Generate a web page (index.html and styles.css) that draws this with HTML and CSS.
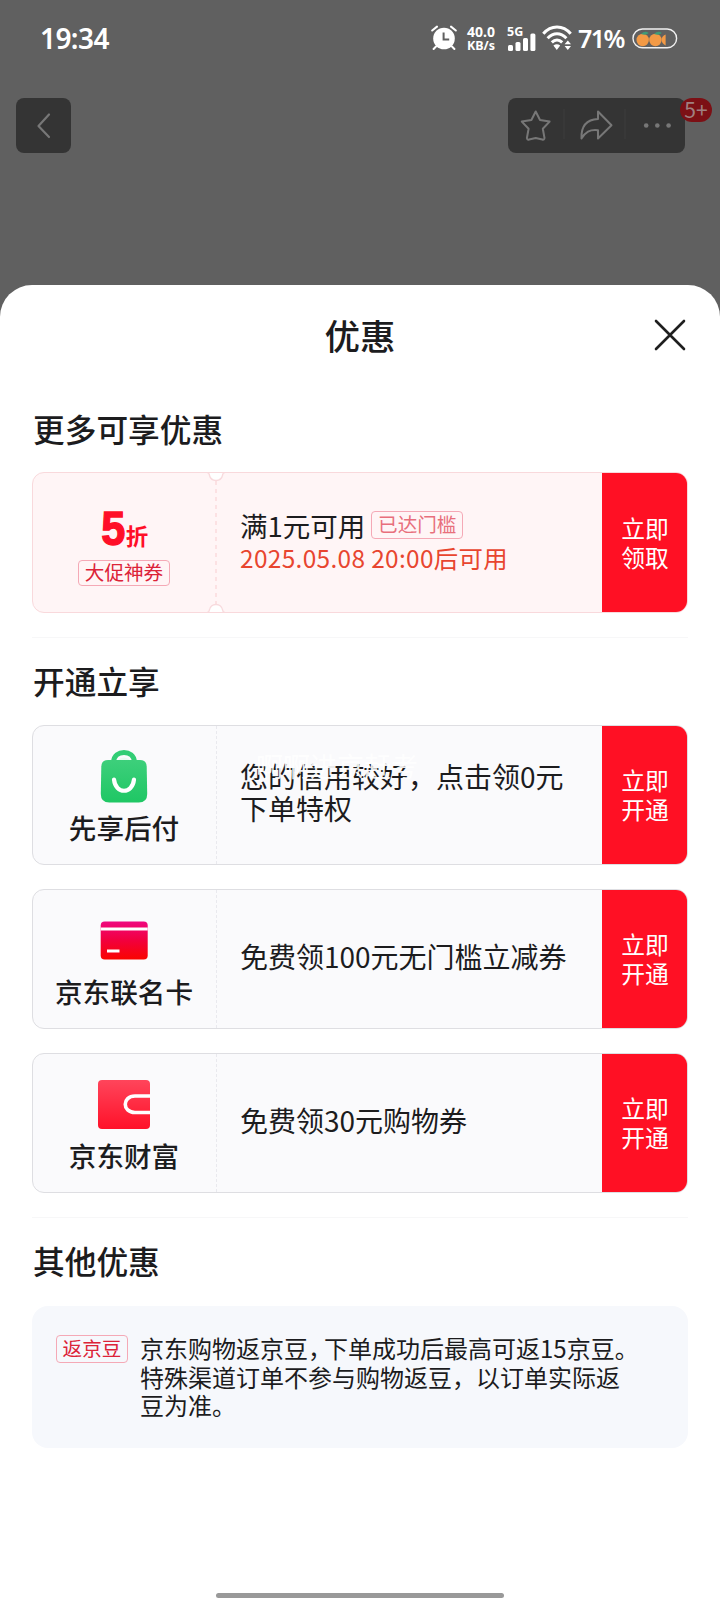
FILE: index.html
```html
<!DOCTYPE html>
<html lang="zh-CN">
<head>
<meta charset="utf-8">
<title>优惠</title>
<link rel="stylesheet" href="styles.css">
</head>
<body>
<div class="screen">
  <header class="status">
    <span class="time">19:34</span>
    <div class="status-icons">
      <svg class="alarm" width="26" height="26" viewBox="0 0 26 26">
        <circle cx="13" cy="13.5" r="10.8" fill="#fff"/>
        <path d="M1.2 5.5 6 1.6M24.8 5.5 20 1.6M5 21.5 2.6 24M21 21.5 23.4 24" stroke="#fff" stroke-width="2" stroke-linecap="round"/>
        <path d="M12.6 7.5v7h5.6" fill="none" stroke="#606060" stroke-width="2"/>
      </svg>
      <div class="speed"><span>40.0</span><span>KB/s</span></div>
      <div class="signal">
        <span class="net">5G</span>
        <svg width="28" height="18" viewBox="0 0 28 18" fill="#fff">
          <rect x="0" y="12" width="5" height="6" rx="1.5"/><rect x="7.5" y="9" width="5" height="9" rx="1.5"/><rect x="15" y="5" width="5" height="13" rx="1.5"/><rect x="22.4" y="0.5" width="5" height="17.5" rx="1.5"/>
        </svg>
      </div>
      <svg class="wifi" width="30" height="26" viewBox="0 0 30 26">
        <g fill="none" stroke="#fff" stroke-width="3">
          <path d="M1.3 8.8C9-.2 21-.2 28.7 8.8"/><path d="M5.6 13.2c5.8-6 13-6 18.8 0"/><path d="M9.8 17.4c3.2-3.2 7.2-3.2 10.4 0"/>
        </g>
        <path d="M11.4 20.6q3.4-2.6 6.8 0L14.8 25zM22.6 19.2l3.2-3.7 3.2 3.7zM22.6 21l3.2 4 3.2-4z" fill="#fff"/>
      </svg>
      <span class="percent">71%</span>
      <svg class="battery" width="46" height="21" viewBox="0 0 46 21">
        <rect x="1" y="1" width="43.6" height="18.8" rx="9.4" fill="none" stroke="#f1f1f1" stroke-width="1.4"/>
        <g fill="#f39a45"><circle cx="10.7" cy="12" r="6.2"/><circle cx="23.4" cy="12" r="6.2"/><path d="M33.6 6.6v10.8c-5.4-2-5.4-8.8 0-10.8z"/></g>
        <path d="M9 6q4-4 7.8-1-3 3-7.8 1zM22 6q4-4 7.8-1-3 3-7.8 1z" fill="#3f9a77"/>
      </svg>
    </div>
  </header>

  <nav class="toolbar">
    <div class="tool-back">
      <svg width="55" height="55" viewBox="0 0 55 55"><path d="M33 16.500 22.500 28l10.500 11" fill="none" stroke="#777" stroke-width="2.200" stroke-linecap="round" stroke-linejoin="round"/></svg>
    </div>
    <div class="tool-group">
      <svg width="177" height="55" viewBox="0 0 177 55" fill="none" stroke="#777" stroke-width="2" stroke-linejoin="round">
        <path d="M27.7 13.500l4.300 8.500 9.600 1.600-6.800 7.200 1.700 9.200q-.2 2.200-2.200 1.500l-6.600-1.500-6.600 1.500q-2 .7-2.200-1.500l1.700-9.200-6.800-7.200 9.600-1.600z"/>
        <path d="M90 13.500 103.500 27.300 90 40.500v-8.200c-8.500-1-12.500 2-16.500 8.200C73 28 79 21.500 90 21z"/>
        <path d="M56 11v30M117 11v30" stroke="#3d3d3d" stroke-width="1"/>
        <g fill="#777" stroke="none"><circle cx="138.200" cy="27.500" r="2.300"/><circle cx="149.300" cy="27.500" r="2.300"/><circle cx="160.600" cy="27.500" r="2.300"/></g>
      </svg>
      <span class="count">5+</span>
    </div>
  </nav>

  <main class="sheet">
    <div class="sheet-head">
      <h1>优惠</h1>
      <svg class="close" width="32" height="32" viewBox="0 0 32 32"><path d="M2 2l28 28M30 2L2 30" stroke="#1f1f1f" stroke-width="2.600" stroke-linecap="round"/></svg>
    </div>

    <section class="block">
      <h2>更多可享优惠</h2>
      <article class="card coupon">
        <div class="left">
          <div class="discount"><b>5</b><span>折</span></div>
          <span class="tag tag-promo">大促神券</span>
        </div>
        <div class="body">
          <p class="row">满1元可用<span class="tag tag-met">已达门槛</span></p>
          <p class="date">2025.05.08 20:00后可用</p>
        </div>
        <div class="action">立即<br>领取</div>
        <svg class="perforation" width="18" height="141" viewBox="0 0 18 141">
          <path d="M9 9v123" stroke="#fbdadd" stroke-width="1.500" stroke-dasharray="4 4"/>
          <path d="M1.500 0Q2 8 9 8.500 16 8 16.500 0zM1.500 141Q2 133 9 132.500 16 133 16.500 141z" fill="#fff"/>
          <path d="M0 .7Q2 .7 2.200 2.500 3.500 8.500 9 8.500 14.500 8.500 15.800 2.500 16 .7 18 .7M0 140.300Q2 140.300 2.200 138.500 3.500 132.500 9 132.500 14.500 132.500 15.800 138.500 16 140.300 18 140.300" fill="none" stroke="#f8dadd" stroke-width="1.300"/>
        </svg>
      </article>
    </section>

    <section class="block">
      <h2>开通立享</h2>
      <div class="cards">
        <article class="card">
          <div class="left service">
            <svg width="56" height="56" viewBox="0 0 56 56">
              <defs><linearGradient id="bag" x2="0" y2="1"><stop offset="0" stop-color="#3dcf7b"/><stop offset="1" stop-color="#1fc764"/></linearGradient></defs>
              <path d="M17.500 13C18 6 23 3.500 28 3.500S38 6 38.500 13" fill="none" stroke="#32cd75" stroke-width="5"/>
              <path d="M12 11h32q6.500 0 6.700 6.500l.5 27.500q0 8.500-8.500 8.500H13.300q-8.500 0-8.500-8.500l.5-27.500Q5.500 11 12 11z" fill="url(#bag)"/>
              <path d="M22 11q6-5 12 0z" fill="#e8faf0"/>
              <path d="M18 30.500c1.500 15 18.500 15 20 0" fill="none" stroke="#fff" stroke-width="4.200" stroke-linecap="round"/>
            </svg>
            <span>先享后付</span>
          </div>
          <div class="body"><p class="offer">您的信用较好，点击领0元下单特权</p><span class="watermark">啊啊进京赶考</span></div>
          <div class="action">立即<br>开通</div>
        </article>
        <article class="card">
          <div class="left service">
            <svg width="56" height="56" viewBox="0 0 56 56">
              <defs><linearGradient id="bank" x2="0" y2="1"><stop offset="0" stop-color="#ef087f"/><stop offset=".5" stop-color="#f2003d"/><stop offset="1" stop-color="#fa0500"/></linearGradient></defs>
              <rect x="4.700" y="8.500" width="47" height="38" rx="4" fill="url(#bank)"/>
              <path d="M4.700 16h47" stroke="#fff" stroke-width="3"/><path d="M11 38h12.500" stroke="#fff" stroke-width="3"/>
            </svg>
            <span>京东联名卡</span>
          </div>
          <div class="body"><p class="offer">免费领100元无门槛立减券</p></div>
          <div class="action">立即<br>开通</div>
        </article>
        <article class="card">
          <div class="left service">
            <svg width="56" height="56" viewBox="0 0 56 56">
              <defs><linearGradient id="wallet" x2="0" y2="1"><stop offset="0" stop-color="#ff455b"/><stop offset="1" stop-color="#ff1129"/></linearGradient></defs>
              <rect x="2" y="3" width="52" height="49" rx="4" fill="url(#wallet)"/>
              <path d="M54 19H39c-13 0-13 16.500 0 16.500h15" fill="none" stroke="#fff" stroke-width="3.600"/>
            </svg>
            <span>京东财富</span>
          </div>
          <div class="body"><p class="offer">免费领30元购物券</p></div>
          <div class="action">立即<br>开通</div>
        </article>
      </div>
    </section>

    <section class="block">
      <h2>其他优惠</h2>
      <div class="note">
        <span class="tag tag-bean">返京豆</span>
        <p>京东购物返京豆<span class="narrow">，</span>下单成功后最高可返15京豆。<br>特殊渠道订单不参与购物返豆，以订单实际返<br>豆为准。</p>
      </div>
    </section>
    <div class="home-bar"></div>
  </main>
</div>
</body>
</html>
```
FILE: styles.css
```css
* { box-sizing: border-box; }
body { margin: 0; font-family: "Noto Sans CJK SC", sans-serif; color: #1c1c1e; }
h1, h2, p { margin: 0; font-weight: 500; }
svg { display: block; flex: none; }
.screen { width: 720px; height: 1600px; background: #606060; display: flex; flex-direction: column; overflow: hidden; }

.status { height: 76px; padding: 0 42px 0 40px; display: flex; align-items: center; justify-content: space-between; color: #fff; font-family: "Noto Sans", sans-serif; }
.time { font-size: 28px; font-weight: 600; letter-spacing: -.6px; }
.status-icons { display: flex; align-items: center; }
.speed { width: 32px; margin-left: 8px; padding-top: 1px; display: flex; flex-direction: column; align-items: center; font-weight: 700; font-size: 14px; line-height: 14px; }
.speed span:last-child { font-size: 12.5px; }
.signal { margin-left: 11px; height: 26px; width: 28px; position: relative; display: flex; align-items: flex-end; }
.net { position: absolute; left: -1px; top: 0; font-size: 12.5px; line-height: 14px; font-weight: 700; }
.wifi { margin-left: 6px; }
.percent { margin-left: 6px; width: 47px; font-size: 25px; font-weight: 600; letter-spacing: -1.5px; white-space: nowrap; }
.battery { margin-left: 7px; }

.toolbar { height: 209px; padding: 22px 35px 0 16px; display: flex; align-items: flex-start; justify-content: space-between; }
.tool-back, .tool-group { height: 55px; background: #343434; border-radius: 8px; }
.tool-group { position: relative; }
.count { position: absolute; left: 172px; top: 0; width: 32px; height: 24px; border-radius: 12px; background: #7c1015; color: #a08080; font-size: 21px; line-height: 23px; text-align: center; }

.sheet { flex: 1; background: #fff; border-radius: 32px 32px 0 0; padding: 0 32px; position: relative; }
.sheet-head { height: 103px; padding-bottom: 3px; display: flex; align-items: center; justify-content: center; position: relative; }
.sheet-head h1 { font-size: 35.5px; line-height: 50px; }
.close { position: absolute; right: 2px; top: 34px; }

.block h2 { height: 84px; padding-left: 1px; font-size: 31.7px; line-height: 81px; }
.block + .block { border-top: 1px solid #f7f7f8; margin-top: 24px; }
.block + .block h2 { height: 87px; line-height: 84px; }
.block:nth-of-type(3) h2 { height: 88px; }
.cards { display: flex; flex-direction: column; gap: 24px; }
.card { position: relative; height: 140px; display: flex; border: 1px solid #dedee2; border-radius: 12px; background: #fafafc; overflow: hidden; }
.left { width: 184px; padding-right: 1px; border-right: 1px dashed #e9e9ee; display: flex; flex-direction: column; align-items: center; }
.service { padding-top: 23px; font-size: 27.6px; font-weight: 500; line-height: 36px; }
.service span { margin-top: 4px; }
.body { flex: 1; padding: 0 0 2px 23px; display: flex; flex-direction: column; justify-content: center; position: relative; font-size: 28px; line-height: 32.5px; }
.body p { font-weight: 400; width: 340px; }
.offer { padding-bottom: 4px; }
.action { width: 86px; margin: -1px; background: #ff1024; color: #fff; display: flex; align-items: center; justify-content: center; font-size: 23.8px; line-height: 28.6px; }
.watermark { position: absolute; left: 39px; top: 23px; font-size: 27px; line-height: 34px; color: rgba(255,255,255,.92); white-space: nowrap; }

.coupon { height: 141px; background: #fff5f6; border-color: #f9d9dc; }
.coupon .left { border: 0; padding: 30px 2px 0 0; }
.discount { height: 57px; color: #ff0f28; display: flex; align-items: baseline; font-weight: 700; }
.discount b { width: 26px; font: 700 48px/52px "Liberation Sans", sans-serif; -webkit-text-stroke: 1.4px #ff0f28; transform: scaleX(.9); }
.discount span { font-size: 22.5px; line-height: 30px; }
.tag { display: inline-block; border: 1px solid #f5a9b6; border-radius: 4px; font-size: 19.6px; line-height: 22px; height: 26px; text-align: center; white-space: nowrap; }
.tag-promo { width: 92px; color: #dc2338; }
.tag-met { width: 92px; height: 28px; line-height: 24px; color: #e86f7c; }
.body .row { display: flex; align-items: center; gap: 6px; font-size: 27.5px; }
.body .date { color: #e8452f; font-size: 24.4px; letter-spacing: .35px; white-space: nowrap; }
.perforation { position: absolute; left: 174px; top: -1px; }

.note { height: 142px; border-radius: 16px; background: #f6f8fc; padding: 28px 24px; display: flex; align-items: flex-start; gap: 12px; }
.tag-bean { width: 72px; height: 28px; margin-top: 1px; line-height: 24px; color: #dc2338; flex: none; }
.note p { font-size: 24px; line-height: 28.6px; font-weight: 400; white-space: nowrap; }
.narrow { display: inline-block; width: 16px; }
.home-bar { position: absolute; left: 216px; bottom: 2px; width: 288px; height: 5px; border-radius: 3px; background: #999; }
```
